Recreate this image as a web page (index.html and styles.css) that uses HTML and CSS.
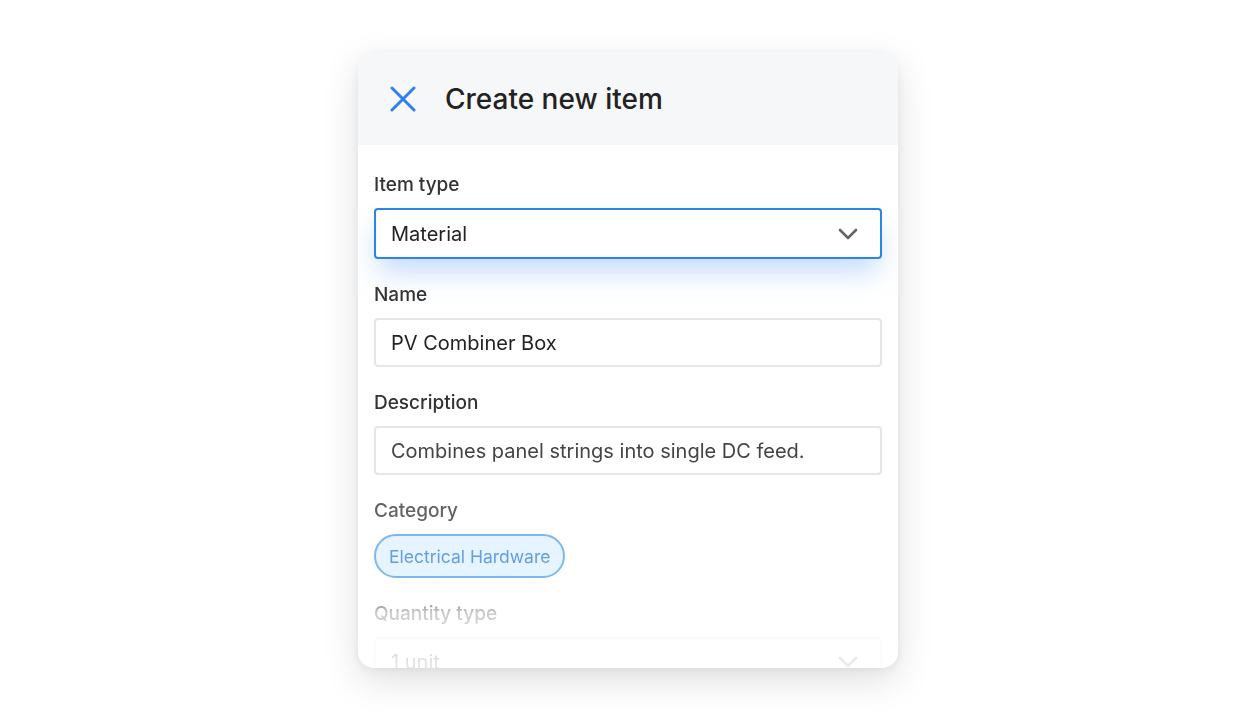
FILE: index.html
```html
<!DOCTYPE html>
<html lang="en">
<head>
<meta charset="utf-8">
<title>Create new item</title>
<link rel="stylesheet" href="styles.css">
</head>
<body>
<div class="page">
  <div class="card">
    <div class="header">
      <svg class="close" width="26" height="26" viewBox="0 0 26 26" aria-hidden="true">
        <path d="M2 2 L24 24 M24 2 L2 24" stroke="#2f80ed" stroke-width="3" stroke-linecap="round" fill="none"/>
      </svg>
      <h1 class="title">Create new item</h1>
    </div>
    <div class="body">
      <div class="field">
        <div class="label">Item type</div>
        <div class="input select active">
          <span>Material</span>
          <svg class="chev" width="20" height="12" viewBox="0 0 20 12" aria-hidden="true"><path d="M2 2 L10 10 L18 2" stroke="#666" stroke-width="2.6" fill="none" stroke-linecap="round" stroke-linejoin="round"/></svg>
        </div>
      </div>
      <div class="field">
        <div class="label">Name</div>
        <div class="input"><span>PV Combiner Box</span></div>
      </div>
      <div class="field">
        <div class="label">Description</div>
        <div class="input"><span class="muted">Combines panel strings into single DC feed.</span></div>
      </div>
      <div class="field">
        <div class="label label-soft">Category</div>
        <div class="chips"><span class="chip">Electrical Hardware</span></div>
      </div>
      <div class="field">
        <div class="label">Quantity type</div>
        <div class="input select">
          <span>1 unit</span>
          <svg class="chev" width="20" height="12" viewBox="0 0 20 12" aria-hidden="true"><path d="M2 2 L10 10 L18 2" stroke="#666" stroke-width="2.6" fill="none" stroke-linecap="round" stroke-linejoin="round"/></svg>
        </div>
      </div>
    </div>
  </div>
</div>
</body>
</html>
```
FILE: styles.css
```css
html, body {
  margin: 0;
  padding: 0;
  background: #ffffff;
}
body {
  font-family: Inter, "Noto Sans", "Liberation Sans", sans-serif;
  color: #222;
}
.page {
  display: flex;
  justify-content: flex-start;
  padding: 52px 0 0 358px;
  height: 720px;
  box-sizing: border-box;
}
.card {
  width: 540px;
  height: 616px;
  border-radius: 16px;
  background: #fff;
  overflow: hidden;
  box-shadow: 0 12px 36px rgba(0, 0, 0, 0.13), 0 2px 8px rgba(0, 0, 0, 0.05);
  display: flex;
  flex-direction: column;
}
.header {
  height: 93px;
  flex: none;
  background: #f6f7f9;
  display: flex;
  align-items: center;
  padding-left: 32px;
  gap: 29px;
}
.close { display: block; flex: none; }
.title {
  margin: 0;
  font-size: 28px;
  font-weight: 500;
  color: #222;
}
.body {
  padding: 28px 16px 0;
  display: flex;
  flex-direction: column;
  gap: 24px;
  -webkit-mask-image: linear-gradient(to bottom, #000 440px, rgba(0,0,0,0.25) 468px, rgba(0,0,0,0.12) 522px);
  mask-image: linear-gradient(to bottom, #000 440px, rgba(0,0,0,0.25) 468px, rgba(0,0,0,0.12) 522px);
}
.field {
  display: flex;
  flex-direction: column;
  gap: 11px;
}
.label {
  font-size: 19px;
  line-height: 24px;
  font-weight: 500;
  color: #333;
}
.label-soft { color: #636363; }
.input {
  height: 49px;
  box-sizing: border-box;
  border: 2px solid #e6e6e6;
  border-radius: 4px;
  display: flex;
  align-items: center;
  justify-content: space-between;
  padding: 0 22px 0 15px;
  font-size: 20px;
  color: #222;
  background: #fff;
}
.input.active {
  height: 51px;
  border-color: #2b84ea;
  box-shadow: 0 16px 28px -4px rgba(80, 150, 240, 0.35);
}
.muted { color: #444; }
.chev { display: block; flex: none; }
.chips { display: flex; }
.chip {
  height: 44px;
  box-sizing: border-box;
  padding: 0 13px 0 13px;
  border: 2px solid #7cb8f0;
  border-radius: 22px;
  background: #e5f4fe;
  color: #639ee0;
  font-size: 17.5px;
  display: flex;
  align-items: center;
}
```
